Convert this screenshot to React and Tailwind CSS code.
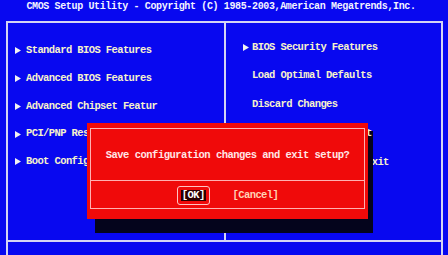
import React from "react";

const Arrow = () => (
  <svg width="6" height="7" viewBox="0 0 6 7" className="shrink-0">
    <polygon points="0,0 6,3.5 0,7" fill="#f2f2f2" />
  </svg>
);

const leftItems = [
  { label: "Standard BIOS Features", arrow: true },
  { label: "Advanced BIOS Features", arrow: true },
  { label: "Advanced Chipset Featur", arrow: true },
  { label: "PCI/PNP Resource Setup", arrow: true },
  { label: "Boot Configuration", arrow: true },
];

const rightItems = [
  { label: "BIOS Security Features", arrow: true },
  { label: "Load Optimal Defaults", arrow: false },
  { label: "Discard Changes", arrow: false },
  { label: "Save Changes and Exit", arrow: false, top: true },
  { label: "Discard Changes and Exit", arrow: false },
];

export default function App() {
  return (
    <div className="relative w-[448px] h-[255px] overflow-hidden bg-[#0808f0] font-['Liberation_Mono','DejaVu_Sans_Mono',monospace] font-bold">
      {/* title */}
      <div className="h-[21px] flex justify-center pt-[1px] pr-[6px] text-[10px] leading-[12px] tracking-[-0.36px] text-[#f2f2ff] whitespace-nowrap">
        CMOS Setup Utility - Copyright (C) 1985-2003,American Megatrends,Inc.
      </div>

      {/* main menu box */}
      <div className="ml-[6px] mr-[5px] h-[221px] border-2 border-[#d4d4f4] grid grid-cols-[218px_1fr]">
        <div className="border-r-2 border-[#d4d4f4] pt-[14px] pl-[7px]">
          {leftItems.map((it) => (
            <div key={it.label} className="h-[27.75px] flex items-center">
              <span className="w-[11px] flex items-center">{it.arrow && <Arrow />}</span>
              <span className="text-[10.5px] tracking-[-0.6px] text-[#f6f2cc] whitespace-nowrap">{it.label}</span>
            </div>
          ))}
        </div>
        <div className="pt-[10px] pl-[17px]">
          {rightItems.map((it) => (
            <div key={it.label} className={it.top ? "relative z-[1] h-[28.75px] flex items-center" : "h-[28.75px] flex items-center"}>
              <span className="w-[9px] flex items-center">{it.arrow && <Arrow />}</span>
              <span className="text-[10.5px] tracking-[-0.6px] text-[#f6f2cc] whitespace-nowrap">{it.label}</span>
            </div>
          ))}
        </div>
      </div>

      {/* help box */}
      <div className="ml-[6px] mr-[5px] h-[20px] border-x-2 border-[#d4d4f4]"></div>

      {/* dialog shadow */}
      <div className="absolute left-[95px] top-[131px] w-[278px] h-[102px] bg-[#04041c]"></div>

      {/* dialog */}
      <div className="absolute z-[2] left-[87px] top-[123px] w-[281px] h-[96px] bg-[#f00a0a] pt-[5px] px-[3px] pb-[10px]">
        <div className="h-full border-[1.5px] border-[#ffb0b0] flex flex-col">
          <div className="h-[52px] pt-[2px] border-b-[1.5px] border-[#ffb0b0] flex items-center justify-center">
            <span className="text-[10.5px] tracking-[-0.5px] text-[#ffe6e6] whitespace-nowrap">
              Save configuration changes and exit setup?
            </span>
          </div>
          <div className="flex-1 flex items-center justify-center gap-[23px] pt-[2px]">
            <div className="border-[1.5px] border-[#ffc4c4] rounded-[3px] px-[3px] py-[3px]">
              <span className="block bg-[#2a0000] px-[1px] text-[10.5px] leading-[11px] tracking-[-0.6px] text-white">
                [OK]
              </span>
            </div>
            <span className="text-[10.5px] tracking-[-0.6px] text-[#ffd2b4]">[Cancel]</span>
          </div>
        </div>
      </div>
    </div>
  );
}
